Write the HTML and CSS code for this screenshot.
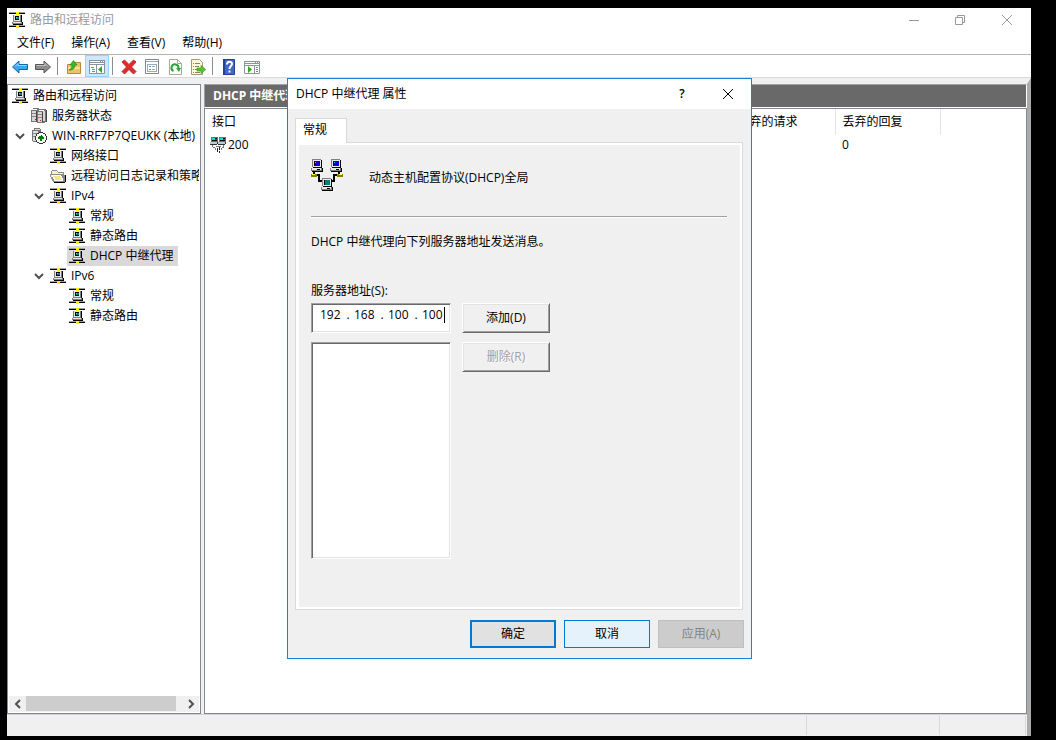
FILE: index.html
```
<!DOCTYPE html>
<html lang="zh-CN">
<head>
  <meta charset="UTF-8" />
  <meta name="viewport" content="width=device-width, initial-scale=1.0" />
  <title>路由和远程访问</title>
  <link rel="stylesheet" href="styles.css">
</head>
<body>
  <svg class="sprite" aria-hidden="true">
    <symbol id="router" viewBox="0 0 16 16">
      <path fill="#000" d="M0 1h16v1H0zM0 14h16v1H0z"/>
      <path fill="#a0a0a0" d="M0 0h16v1H0zM0 13h16v1H0z"/>
      <path fill="#ffee00" d="M7 0h3v3H7zM7 13h3v3H7z"/>
      <path fill="#000" d="M12 3h1v7h-1zM13 10h1v3h-1zM4 12h10v1H4z"/>
      <path fill="#808080" d="M4 3h8v7H4zM3 10h10v2H3z"/>
      <path fill="#e4e4e4" d="M5 3h6v1H5zM5 4h1v5H5zM10 4h1v5h-1zM5 8h6v1H5zM4 10h8v1H4z"/>
      <path fill="#000" d="M6 4h4v4H6z"/>
      <path fill="#008080" d="M7 5h3v2H7z"/>
      <path fill="#00ffff" d="M7 5h1v1H7z"/>
    </symbol>
    <symbol id="servers" viewBox="0 0 16 16">
      <path fill="#777" d="M2 0h6v1h7v13h-1v1H6v-1H0V2h2z"/>
      <path fill="#d6d6d6" d="M1 3h4v10H1zM7 4h4v10H7zM12 3h2v10h-2z"/>
      <path fill="#fff" d="M2 1h4v1H2zM8 2h5v1H8z"/>
      <path fill="#8a8a8a" d="M1 5h4v1H1zM1 8h4v1H1zM7 6h4v1H7zM7 9h4v1H7z"/>
      <path fill="#444" d="M5 3h1v11H5zM11 4h1v10h-1zM15 2h1v12h-1z"/>
      <path fill="#f00" d="M4 11h1v1H4zM9 12h1v1H9z"/>
    </symbol>
    <symbol id="server" viewBox="0 0 16 16">
      <path fill="#777" d="M3 0h6v1h1v13H2v-1H1V2h2z"/>
      <path fill="#ddd" d="M2 3h5v10H2zM4 1h5v1H4z"/>
      <path fill="#888" d="M2 5h5v1H2zM2 8h5v1H2z"/>
      <circle cx="10" cy="10" r="5.500" fill="#fff" stroke="#333"/>
      <path fill="#007f00" d="M10 7h1v1h1v1h1v2h-2v2H9v-2H7V9h1V8h2z"/>
    </symbol>
    <symbol id="folder" viewBox="0 0 16 16">
      <path fill="#8c8c8c" d="M2 2h5v1h1v1h6v3h1v7H3v-1H2v-2H1V9H0V6h1V3h1z"/>
      <path fill="#f4f0d0" d="M2 3h5v1h1v1h5v1H2z"/>
      <path fill="#fff" d="M1 7h10v1h1v2h1v3H4v-2H3V9H1z"/>
      <path fill="#efe78a" d="M3 8h7v1h1v2h1v1H5v-2H4V9H3z"/>
      <path fill="#000" d="M4 14h11v1H4zM15 7h1v7h-1z"/>
    </symbol>
    <symbol id="nic" viewBox="0 0 16 16">
      <path fill="#707070" d="M1 0h7v5H1zM9 0h7v5H9z"/>
      <path fill="#00e0e0" d="M2 1h3v2H2zM10 1h3v2h-3z"/>
      <path fill="#000" d="M5 1h2v1H5zM2 3h5v1H2zM13 1h2v1h-2zM10 3h5v1h-5z"/>
      <path fill="#008080" d="M5 2h2v1H5zM13 2h2v1h-2z"/>
      <path fill="#c8c8c8" d="M0 5h7v2H0zM8 5h7v2H8z"/>
      <path fill="#333" d="M0 7h7v1H0zM8 7h7v1H8zM7 5h1v2H7zM15 5h1v2h-1z"/>
      <path fill="#777" d="M2 8h1v2H2zM13 8h1v2h-1zM3 10h2v1H3zM12 10h2v1h-2zM6 9h5v1H6zM5 11h1v2H5zM11 11h1v2h-1z"/>
      <path fill="#222" d="M7 11h1v2H7zM9 10h1v3H9zM7 13h1v2H7zM9 14h1v2H9z"/>
    </symbol>
    <symbol id="chevron" viewBox="0 0 10 10">
      <path fill="none" stroke="#505050" stroke-width="2" d="M1 3l4 4 4-4"/>
    </symbol>
    <symbol id="pc" viewBox="0 0 12 13">
      <path fill="#000" d="M2 1h9v8h1v4H1v-1h1z"/>
      <path fill="#808080" d="M1 0h9v8H1zM0 9h11v3H0z"/>
      <path fill="#e8e8e8" d="M2 1h8v7H2zM1 9h9v2H1z"/>
      <path fill="#000" d="M3 2h6v5H3zM6 10h3v1H6zM2 8h8v1H2z"/>
    </symbol>
  </svg>

  <div class="window">
    <header class="titlebar">
      <svg class="icon"><use href="#router"/></svg>
      <span class="title">路由和远程访问</span>
      <div class="caption">
        <button aria-label="最小化"><svg viewBox="0 0 12 12"><path d="M1 6.500h10"/></svg></button>
        <button aria-label="还原"><svg viewBox="0 0 12 12"><path d="M1.500 3.500h7v7h-7zM3.500 3.500v-2h7v7h-2"/></svg></button>
        <button aria-label="关闭"><svg viewBox="0 0 12 12"><path d="M1 1l10 10M11 1L1 11"/></svg></button>
      </div>
    </header>

    <nav class="menubar">
      <button>文件(F)</button>
      <button>操作(A)</button>
      <button>查看(V)</button>
      <button>帮助(H)</button>
    </nav>

    <div class="toolbar">
      <button aria-label="后退">
        <svg viewBox="0 0 16 16"><path fill="#35aaf0" stroke="#1464a8" d="M.5 8L7 2v3.500h8.500v5H7V14z"/><path stroke="#8fd6ff" d="M3 7.500l3-3v2h8.500"/></svg>
      </button>
      <button aria-label="前进">
        <svg viewBox="0 0 16 16"><path fill="#8c8c8c" stroke="#555" d="M15.500 8L9 2v3.500H.5v5H9V14z"/><path stroke="#c4c4c4" d="M1.500 6.500H10v-2l3 3"/></svg>
      </button>
      <span class="sep"></span>
      <button aria-label="上一级">
        <svg viewBox="0 0 16 16"><path fill="#e9c468" stroke="#b58a35" d="M1.500 5.500h6l1-2h6v11h-13z"/><path fill="#f8df98" d="M2 8h12v2H2z"/><path fill="#3db52b" stroke="#22801a" stroke-width=".6" d="M3 11c2.500-1 3-3 3-5H4l3.500-4.500L11 6H9c0 3-2 5.500-6 5z"/></svg>
      </button>
      <button class="active" aria-label="显示/隐藏控制台树">
        <svg viewBox="0 0 16 16"><path fill="#fff" stroke="#8a949e" d="M.5 1.500h15v13H.5z"/><path fill="#8a949e" d="M0 1h16v3H0zM0 5h16v1H0zM7 6h1v9H7z"/><path fill="#fff" d="M1 2h10v1H1zM12 2h1v1h-1zM14 2h1v1h-1z"/><path fill="#6c88a4" d="M2 8h3v1H2zM3 10h3v1H3zM3 12h3v1H3z"/><path fill="#31a722" d="M13 7v7l-4-3.500z"/></svg>
      </button>
      <span class="sep"></span>
      <button aria-label="删除">
        <svg viewBox="0 0 16 16"><path fill="#e32929" stroke="#b93030" d="M1 3l2.500-2L8 5.500 12.500 1 15 3l-4.500 5 4.500 4.500-2.500 2.500L8 10.500 3.500 15 1 12.500 5.500 8z"/></svg>
      </button>
      <button aria-label="属性">
        <svg viewBox="0 0 16 16"><path fill="#fff" stroke="#818890" d="M1.500.5h13v14h-13z"/><path fill="#a0a8b0" d="M2 2h12v1H2zM3 5h10v1H3zM3 5h1v8H3zM12 5h1v8h-1zM3 12h10v1H3zM8 7h3v1H8zM8 10h3v1H8z"/><path fill="#4696bc" d="M5 7h2v1H5zM5 10h2v1H5z"/></svg>
      </button>
      <button aria-label="刷新">
        <svg viewBox="0 0 16 16"><path fill="#fff" stroke="#a8a89c" d="M2.500.5h8l4 4v11h-12z"/><path stroke="#a8a89c" d="M10.500.5v4h4"/><path stroke="#2da536" stroke-width="2" d="M6.500 12A3.500 3.500 0 1 1 11.500 9"/><path fill="#2da536" d="M9 9h5l-2 4z"/></svg>
      </button>
      <button aria-label="导出列表">
        <svg viewBox="0 0 16 16"><path fill="#fff8d8" stroke="#a39a78" d="M1.500.5h8l3 3v12h-11z"/><path fill="#8a8368" d="M3 4h1v1H3zM5 4h5v1H5zM3 7h1v1H3zM5 7h4v1H5zM3 10h1v1H3zM5 10h3v1H5zM3 13h1v1H3zM5 13h5v1H5z"/><path fill="#56c52d" stroke="#2f8c17" stroke-width=".6" d="M7 9h4V6.500l4.700 4L11 14.500V12H7z"/></svg>
      </button>
      <span class="sep"></span>
      <button aria-label="帮助">
        <svg viewBox="0 0 16 16"><path fill="#3f66c8" stroke="#24409a" d="M2.500.5h11v15h-11z"/><path fill="#24409a" d="M2 0h2v16H2z"/><path stroke="#fff" stroke-width="2" d="M6 5.500C6 2 11 2 11 5c0 2-2.500 2-2.500 5M8.500 11.500v2"/></svg>
      </button>
      <button aria-label="显示/隐藏操作窗格">
        <svg viewBox="0 0 16 16"><path fill="#fff" stroke="#8a949e" d="M.5 2.500h15v12H.5z"/><path fill="#8a949e" d="M0 2h16v3H0zM0 6h16v1H0zM10 6h1v9h-1z"/><path fill="#fff" d="M1 3h10v1H1zM12 3h1v1h-1zM14 3h1v1h-1z"/><path fill="#6c88a4" d="M12 8h2v1h-2zM12 10h2v1h-2zM12 12h2v1h-2z"/><path fill="#31a722" d="M4 7v7l4-3.500z"/></svg>
      </button>
    </div>

    <div class="workspace">
      <div class="panes">
        <aside class="tree-pane">
          <ul class="tree">
            <li class="lv0"><span class="twist"></span><svg class="icon"><use href="#router"/></svg><span>路由和远程访问</span></li>
            <li class="lv1"><span class="twist"></span><svg class="icon"><use href="#servers"/></svg><span>服务器状态</span></li>
            <li class="lv1"><svg class="twist"><use href="#chevron"/></svg><svg class="icon"><use href="#server"/></svg><span>WIN-RRF7P7QEUKK (本地)</span></li>
            <li class="lv2"><span class="twist"></span><svg class="icon"><use href="#router"/></svg><span>网络接口</span></li>
            <li class="lv2"><span class="twist"></span><svg class="icon"><use href="#folder"/></svg><span>远程访问日志记录和策略</span></li>
            <li class="lv2"><svg class="twist"><use href="#chevron"/></svg><svg class="icon"><use href="#router"/></svg><span>IPv4</span></li>
            <li class="lv3"><span class="twist"></span><svg class="icon"><use href="#router"/></svg><span>常规</span></li>
            <li class="lv3"><span class="twist"></span><svg class="icon"><use href="#router"/></svg><span>静态路由</span></li>
            <li class="lv3"><span class="twist"></span><span class="selected"><svg class="icon"><use href="#router"/></svg><span>DHCP 中继代理</span></span></li>
            <li class="lv2"><svg class="twist"><use href="#chevron"/></svg><svg class="icon"><use href="#router"/></svg><span>IPv6</span></li>
            <li class="lv3"><span class="twist"></span><svg class="icon"><use href="#router"/></svg><span>常规</span></li>
            <li class="lv3"><span class="twist"></span><svg class="icon"><use href="#router"/></svg><span>静态路由</span></li>
          </ul>
          <div class="scrollbar">
            <button aria-label="向左滚动"><svg viewBox="0 0 10 10"><path d="M7 1L3 5l4 4"/></svg></button>
            <div class="track"><div class="thumb"></div></div>
            <button aria-label="向右滚动"><svg viewBox="0 0 10 10"><path d="M3 1l4 4-4 4"/></svg></button>
          </div>
        </aside>

        <main class="list-pane">
          <h1 class="list-title">DHCP 中继代理</h1>
          <div class="list-view">
            <table>
              <thead>
                <tr><th>接口</th><th></th><th></th><th></th><th></th><th>丢弃的请求</th><th>丢弃的回复</th></tr>
              </thead>
              <tbody>
                <tr><td><span class="cell-icon"><svg class="icon"><use href="#nic"/></svg>200</span></td><td></td><td></td><td></td><td></td><td></td><td>0</td></tr>
              </tbody>
            </table>
          </div>
        </main>
      </div>
      <footer class="statusbar"><span class="grow"></span><span class="mid"></span><span class="small"></span></footer>
    </div>

    <section class="dialog" role="dialog" aria-labelledby="dialogTitle">
      <div class="dialog-title">
        <h2 id="dialogTitle">DHCP 中继代理 属性</h2>
        <button aria-label="帮助">?</button>
        <button aria-label="关闭"><svg viewBox="0 0 12 12"><path d="M1 1l10 10M11 1L1 11"/></svg></button>
      </div>
      <div class="dialog-body">
        <div class="tabs"><button class="tab">常规</button></div>
        <div class="panel">
          <div class="intro">
            <svg class="net" viewBox="0 0 32 32">
              <path fill="none" stroke="#000" stroke-width="2" d="M3 12v4h5v6h3M28 12v4h-5v6h-3"/>
              <path fill="#8a7c00" d="M0 15h6v3H0zM26 15h6v3h-6z"/>
              <path fill="#ffff60" d="M1 15h3v1H1zM28 15h3v1h-3z"/>
              <use href="#pc" x="0" y="0" width="12" height="13"/>
              <use href="#pc" x="19" y="0" width="12" height="13"/>
              <use href="#pc" x="10" y="19" width="12" height="13"/>
              <path fill="#0000e0" d="M4 2h5v5H4zM23 2h5v5h-5z"/>
              <path fill="#00ffff" d="M4 3h1v1H4zM23 3h1v1h-1z"/>
              <path fill="#008080" d="M14 21h5v5h-5z"/>
            </svg>
            <span>动态主机配置协议(DHCP)全局</span>
          </div>
          <hr>
          <p class="desc">DHCP 中继代理向下列服务器地址发送消息。</p>
          <label class="addr-label" for="octet1">服务器地址(S):</label>
          <div class="addr-grid">
            <div class="ip-box">
              <input id="octet1" type="text" value="192" maxlength="3"><i>.</i>
              <input type="text" value="168" maxlength="3" aria-label="第二段"><i>.</i>
              <input type="text" value="100" maxlength="3" aria-label="第三段"><i>.</i>
              <input type="text" value="100" maxlength="3" aria-label="第四段"><b class="caret"></b>
            </div>
            <button class="classic">添加(D)</button>
            <select class="addr-list" size="2" aria-label="服务器地址列表"></select>
            <button class="classic" disabled>删除(R)</button>
          </div>
        </div>
        <div class="actions">
          <button class="btn default">确定</button>
          <button class="btn hover">取消</button>
          <button class="btn" disabled>应用(A)</button>
        </div>
      </div>
    </section>
  </div>
</body>
</html>
```
FILE: styles.css
```
:root {
  --face: #f0f0f0;
  --line: #d9d9d9;
  --edge: #828790;
  --accent: #0078d7;
}

* {
  box-sizing: border-box;
}

body {
  margin: 0;
  padding: 8px 25px 4px 7px;
  height: 100vh;
  background: #000;
  color: #000;
  font-family: "Open Sans", "Noto Sans CJK SC", sans-serif;
  font-size: 12px;
  line-height: 20px;
  overflow: hidden;
}

button,
input,
select {
  margin: 0;
  padding: 0;
  border: none;
  border-radius: 0;
  background: none;
  color: inherit;
  font: inherit;
}

.sprite {
  display: none;
}

svg {
  display: block;
  flex: none;
}

.icon {
  width: 16px;
  height: 16px;
  shape-rendering: crispEdges;
}

.window {
  position: relative;
  display: flex;
  flex-direction: column;
  height: 100%;
  background: #fff;
}

/* title bar and menu */
.titlebar {
  display: flex;
  align-items: center;
  height: 23px;
  padding-left: 2px;
  color: #999;
}

.title {
  flex: 1;
  margin-left: 5px;
}

.caption {
  display: flex;
}

.caption button {
  display: flex;
  justify-content: center;
  width: 46px;
}

.caption svg {
  width: 12px;
  height: 12px;
  fill: none;
  stroke: #999;
}

.caption button:last-child {
  width: 48px;
}

.menubar {
  display: flex;
  gap: 17px;
  height: 24px;
  padding: 2px 10px;
  border-bottom: 1px solid #b4b4b4;
}

/* toolbar */
.toolbar {
  display: flex;
  align-items: center;
  height: 23px;
  padding-left: 1px;
  border-bottom: 1px solid var(--line);
}

.toolbar button {
  display: flex;
  align-items: center;
  justify-content: center;
  width: 23px;
  height: 22px;
}

.toolbar svg {
  width: 16px;
  height: 16px;
  margin-top: 2px;
  fill: none;
}

.toolbar .active {
  width: 24px;
  border: 1px solid #99d1ff;
  background: #cce8ff;
}

.sep {
  width: 1px;
  height: 18px;
  margin: 0 4px 0 3px;
  background: #8c8c8c;
}

/* panes */
.workspace {
  flex: 1;
  display: flex;
  flex-direction: column;
  min-height: 0;
  border-top: 6px solid var(--face);
  border-right: 4px solid #ababab;
  background: var(--face);
}

.panes {
  flex: 1;
  display: flex;
  gap: 3px;
  min-height: 0;
}

.tree-pane {
  display: flex;
  flex-direction: column;
  width: 194px;
  padding: 1px;
  border: 1px solid var(--edge);
  background: #fff;
  overflow: hidden;
}

.tree {
  flex: 1;
  margin: 0;
  padding: 0;
  list-style: none;
  overflow: hidden;
}

.tree li {
  display: flex;
  align-items: center;
  gap: 5px;
  height: 20px;
  white-space: nowrap;
}

.twist {
  flex: none;
  width: 10px;
  height: 10px;
  margin-right: 1px;
}

.lv0 {
  margin-left: -13px;
}

.lv1 {
  margin-left: 6px;
}

.lv2 {
  margin-left: 25px;
}

.lv3 {
  margin-left: 44px;
}

.selected {
  display: flex;
  align-items: center;
  gap: 5px;
  height: 20px;
  margin-left: -2px;
  padding: 0 5px 0 2px;
  background: #d9d9d9;
}

.scrollbar {
  display: flex;
  height: 16px;
  background: var(--face);
}

.scrollbar button {
  display: flex;
  align-items: center;
  justify-content: center;
  width: 17px;
}

.scrollbar svg {
  width: 10px;
  height: 10px;
  fill: none;
  stroke: #505050;
  stroke-width: 2;
}

.track {
  flex: 1;
}

.thumb {
  width: 96%;
  height: 15px;
  background: #cdcdcd;
}

.list-pane {
  flex: 1;
  display: flex;
  flex-direction: column;
  min-width: 0;
}

.list-title {
  height: 24px;
  margin: 0;
  padding: 1px 8px;
  border: 1px solid #a0a0a0;
  border-right-color: #fff;
  border-bottom-color: #fff;
  background: #696969;
  color: #fff;
  font-size: 12px;
}

.list-view {
  flex: 1;
  border: 1px solid var(--edge);
  background: #fff;
}

table {
  border-collapse: collapse;
  table-layout: fixed;
  width: 735px;
}

th,
td {
  width: 105px;
  height: 20px;
  padding: 0 7px;
  font-weight: normal;
  text-align: left;
}

th {
  height: 26px;
  border-right: 1px solid #e5e5e5;
}

.cell-icon {
  display: flex;
  align-items: center;
  gap: 2px;
  margin-left: -2px;
}

.statusbar {
  display: flex;
  height: 22px;
  padding: 1px 1px 1px 0;
  border-top: 1px solid #d0d0d0;
}

.statusbar span {
  border-right: 1px solid var(--line);
}

.grow {
  flex: 1;
}

.mid {
  width: 133px;
}

.small {
  width: 86px;
}

/* properties dialog, floats above the console */
.dialog {
  position: absolute;
  top: 70px;
  left: 280px;
  width: 465px;
  border: 1px solid #1883d7;
  background: var(--face);
}

.dialog-title {
  display: flex;
  align-items: center;
  height: 30px;
  padding-left: 8px;
  background: #fff;
}

.dialog-title h2 {
  flex: 1;
  margin: 0;
  font-size: 12px;
  font-weight: normal;
}

.dialog-title button {
  display: flex;
  justify-content: center;
  width: 46px;
  font-weight: 600;
}

.dialog-title svg {
  width: 12px;
  height: 12px;
  fill: none;
  stroke: #000;
}

.dialog-body {
  padding: 9px 7px 10px;
}

.tabs {
  display: flex;
}

.tab {
  width: 52px;
  height: 25px;
  margin-bottom: -1px;
  padding: 0 7px 2px;
  border: 1px solid var(--line);
  border-bottom: none;
  background: #fff;
  text-align: left;
  z-index: 1;
}

.panel {
  height: 468px;
  margin-right: 1px;
  padding: 13px 15px 0;
  border: 1px solid var(--line);
  box-shadow: inset 3px 2px #fff, inset -2px -2px #fff;
}

.intro {
  display: flex;
  align-items: center;
  gap: 26px;
  height: 44px;
}

.net {
  align-self: flex-start;
  width: 32px;
  height: 32px;
  margin-top: 3px;
  shape-rendering: crispEdges;
}

hr {
  margin: 16px 0 14px;
  border: none;
  border-top: 1px solid #a0a0a0;
  border-bottom: 1px solid #fff;
}

.desc {
  margin: 0 0 29px;
}

.addr-label {
  display: block;
  margin-bottom: 2px;
}

.addr-grid {
  display: grid;
  grid-template-columns: 140px 88px;
  gap: 9px 11px;
  align-items: start;
}

.ip-box,
.addr-list {
  border: 1px solid;
  border-color: #a0a0a0 #fff #fff #a0a0a0;
  background: #fff;
  box-shadow: inset 1px 1px #696969, inset -1px -1px #e3e3e3;
}

.ip-box {
  display: flex;
  height: 30px;
  padding: 1px 0 0 8px;
}

.ip-box input {
  width: 22px;
  height: 20px;
}

.ip-box i {
  width: 12px;
  font-style: normal;
  text-align: center;
}

.caret {
  width: 1px;
  height: 16px;
  margin-top: 2px;
  background: #000;
}

.addr-list {
  width: 140px;
  height: 217px;
  outline: none;
}

.classic {
  height: 30px;
  border: 1px solid;
  border-color: #fff #696969 #696969 #fff;
  background: var(--face);
  box-shadow: inset 1px 1px #e3e3e3, inset -1px -1px #a0a0a0;
}

.classic:disabled {
  color: #a0a0a0;
  text-shadow: 1px 1px #fff;
}

.actions {
  display: flex;
  justify-content: flex-end;
  gap: 8px;
  margin-top: 10px;
}

.btn {
  width: 86px;
  height: 28px;
  border: 1px solid #adadad;
  background: #e1e1e1;
}

.btn.default {
  border: 2px solid var(--accent);
}

.btn.hover {
  border-color: var(--accent);
  background: #e5f1fb;
}

.btn:disabled {
  border-color: #bfbfbf;
  background: #ccc;
  color: #838383;
}
```
